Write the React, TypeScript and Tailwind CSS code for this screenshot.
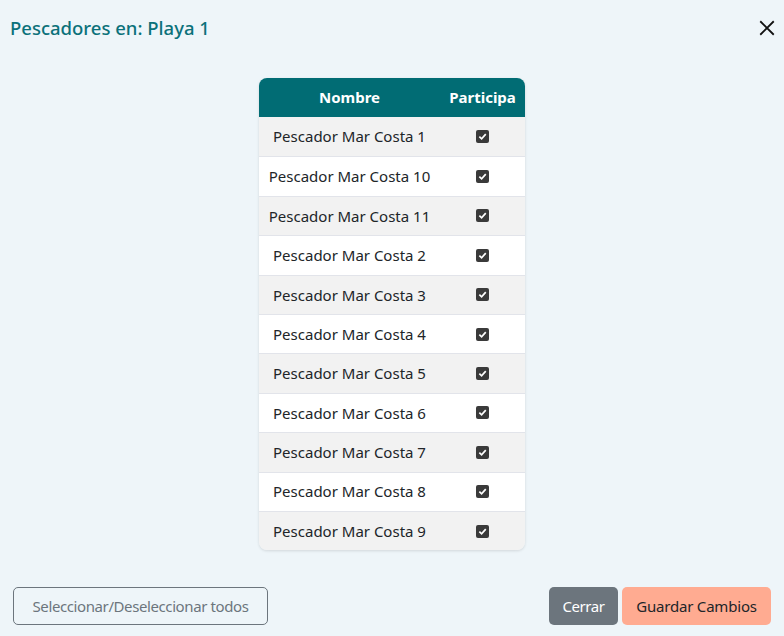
import React, { useState } from "react";

const pescadores = [
  "Pescador Mar Costa 1",
  "Pescador Mar Costa 10",
  "Pescador Mar Costa 11",
  "Pescador Mar Costa 2",
  "Pescador Mar Costa 3",
  "Pescador Mar Costa 4",
  "Pescador Mar Costa 5",
  "Pescador Mar Costa 6",
  "Pescador Mar Costa 7",
  "Pescador Mar Costa 8",
  "Pescador Mar Costa 9",
];

function Check({ checked, onClick }: { checked: boolean; onClick: () => void }) {
  return (
    <button
      onClick={onClick}
      className={`w-[13px] h-[13px] rounded-[2px] flex items-center justify-center ${
        checked ? "bg-[#3a3a3a]" : "bg-white border border-[#767676]"
      }`}
    >
      {checked && (
        <svg width="9" height="9" viewBox="0 0 10 10">
          <path d="M1.5 5.2 L4 7.6 L8.6 2.4" fill="none" stroke="white" strokeWidth="1.9" />
        </svg>
      )}
    </button>
  );
}

export default function App() {
  const [sel, setSel] = useState<boolean[]>(pescadores.map(() => true));

  const toggle = (i: number) =>
    setSel((s) => s.map((v, j) => (j === i ? !v : v)));
  const toggleAll = () => {
    const all = sel.every(Boolean);
    setSel(sel.map(() => !all));
  };

  return (
    <div
      className="w-[784px] h-[636px] bg-[#eef5f9] flex flex-col text-[#212529]"
      style={{ fontFamily: '"Noto Sans", "Open Sans", sans-serif' }}
    >
      <div className="flex items-center justify-between h-[56px] pl-[10px] pr-[8px]">
        <h1 className="text-[18.5px] font-medium text-[#0b717a]">Pescadores en: Playa 1</h1>
        <button className="w-[18px] h-[18px] flex items-center justify-center">
          <svg width="18" height="18" viewBox="0 0 16 16">
            <path d="M2 2 L14 14 M14 2 L2 14" stroke="#111" strokeWidth="1.6" />
          </svg>
        </button>
      </div>

      <div className="flex-1 flex justify-center pt-[22px]">
        <div className="w-[266px] self-start rounded-[8px] overflow-hidden shadow-[0_1px_3px_rgba(0,0,0,0.12)]">
          <div className="flex h-[39px] bg-[#016c74] text-white font-bold text-[15px] items-center">
            <div className="w-[181px] text-center">Nombre</div>
            <div className="flex-1 text-center">Participa</div>
          </div>
          {pescadores.map((p, i) => (
            <div
              key={p}
              className={`flex h-[39.4px] items-center text-[15px] ${
                i % 2 === 0 ? "bg-[#f2f2f2]" : "bg-white"
              } ${i > 0 ? "border-t border-[#e2e4ea]" : ""}`}
            >
              <div className="w-[181px] text-center">{p}</div>
              <div className="flex-1 flex justify-center">
                <Check checked={sel[i]} onClick={() => toggle(i)} />
              </div>
            </div>
          ))}
        </div>
      </div>

      <div className="flex items-center justify-between px-[13px] pb-[11px]">
        <button
          onClick={toggleAll}
          className="h-[38px] w-[255px] border border-[#6c757d] rounded-[5px] text-[#6c757d] text-[15px] tracking-[-0.4px]"
        >
          Seleccionar/Deseleccionar todos
        </button>
        <div className="flex gap-[4px]">
          <button className="h-[38px] w-[69px] bg-[#6c757d] text-white rounded-[5px] text-[15px] tracking-[-0.4px]">
            Cerrar
          </button>
          <button className="h-[38px] w-[149px] bg-[#ffab91] rounded-[5px] text-[15px] tracking-[-0.2px]">
            Guardar Cambios
          </button>
        </div>
      </div>
    </div>
  );
}
